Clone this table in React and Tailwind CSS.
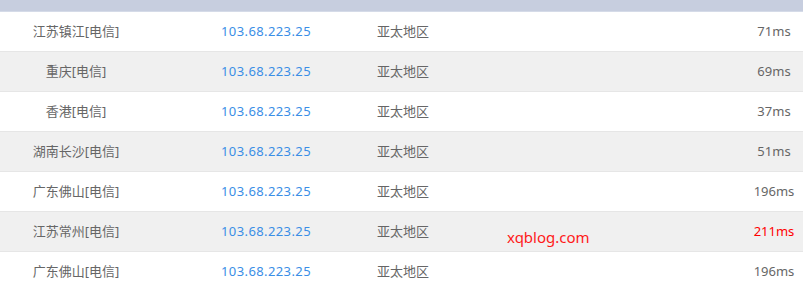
import React from "react";

const rows = [
  { node: "江苏镇江[电信]", ip: "103.68.223.25", area: "亚太地区", ms: "71ms" },
  { node: "重庆[电信]", ip: "103.68.223.25", area: "亚太地区", ms: "69ms" },
  { node: "香港[电信]", ip: "103.68.223.25", area: "亚太地区", ms: "37ms" },
  { node: "湖南长沙[电信]", ip: "103.68.223.25", area: "亚太地区", ms: "51ms" },
  { node: "广东佛山[电信]", ip: "103.68.223.25", area: "亚太地区", ms: "196ms" },
  { node: "江苏常州[电信]", ip: "103.68.223.25", area: "亚太地区", ms: "211ms", slow: true, mark: true },
  { node: "广东佛山[电信]", ip: "103.68.223.25", area: "亚太地区", ms: "196ms" },
];

function App() {
  return (
    <div
      className="w-[803px] h-[288px] overflow-hidden bg-white text-[13px] text-[#666]"
      style={{ fontFamily: '"Noto Sans", "Noto Sans CJK SC", sans-serif' }}
    >
      {/* Header */}
      <div className="h-[12px] bg-[#c7cedf] border-b border-[#d5dbe8]"></div>

      {/* Rows */}
      {rows.map((row, i) => (
        <div
          key={i}
          className={`flex items-center h-[40px] border-b border-[#e6e6e6] ${
            i % 2 === 1 ? "bg-[#f0f0f0]" : "bg-white"
          }`}
        >
          <div className="w-[152px] text-center">{row.node}</div>
          <div className="w-[228px] text-center text-[#3a8ee6] tracking-[0.4px]">{row.ip}</div>
          <div className="flex-1 -ml-[3px] flex items-center">
            <span className="w-[130px] shrink-0">{row.area}</span>
            {row.mark && (
              <span className="text-[15px] text-[#ff1a1a] mt-[12px]">xqblog.com</span>
            )}
          </div>
          <div className={`w-[58px] text-center ${row.slow ? "text-[#ff0000]" : ""}`}>
            {row.ms}
          </div>
        </div>
      ))}
    </div>
  );
}

export default App;
